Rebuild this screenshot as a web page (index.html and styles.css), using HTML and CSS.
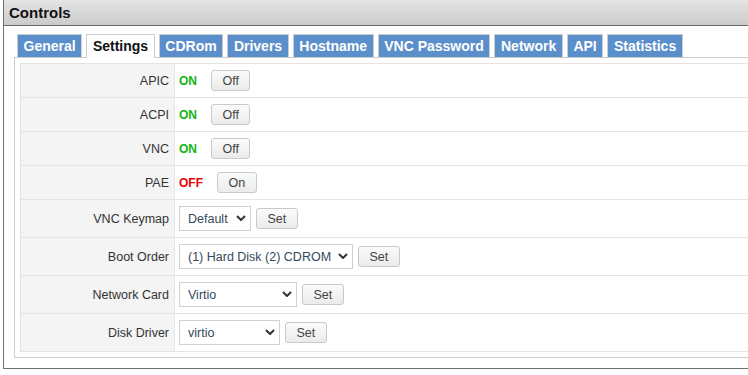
FILE: index.html
```html
<!DOCTYPE html>
<html lang="en">
<head>
    <meta charset="UTF-8">
    <meta name="viewport" content="width=device-width, initial-scale=1.0">
    <title>Controls</title>
    <link rel="stylesheet" href="styles.css">
</head>
<body>
    <div class="panel">
        <div class="panel-header">Controls</div>
        <div class="panel-body">
            <ul class="tabs">
                <li class="tab">General</li>
                <li class="tab active">Settings</li>
                <li class="tab">CDRom</li>
                <li class="tab">Drivers</li>
                <li class="tab">Hostname</li>
                <li class="tab">VNC Password</li>
                <li class="tab">Network</li>
                <li class="tab">API</li>
                <li class="tab">Statistics</li>
            </ul>
            <div class="tab-content">
                <table class="settings">
                    <tr class="toggle-row">
                        <td class="label">APIC</td>
                        <td class="value"><div class="field"><span class="state on">ON</span><button class="btn">Off</button></div></td>
                    </tr>
                    <tr class="toggle-row">
                        <td class="label">ACPI</td>
                        <td class="value"><div class="field"><span class="state on">ON</span><button class="btn">Off</button></div></td>
                    </tr>
                    <tr class="toggle-row">
                        <td class="label">VNC</td>
                        <td class="value"><div class="field"><span class="state on">ON</span><button class="btn">Off</button></div></td>
                    </tr>
                    <tr class="toggle-row">
                        <td class="label">PAE</td>
                        <td class="value"><div class="field"><span class="state off">OFF</span><button class="btn">On</button></div></td>
                    </tr>
                    <tr class="select-row">
                        <td class="label">VNC Keymap</td>
                        <td class="value">
                            <div class="field">
                                <div class="select-wrap">
                                    <select class="select keymap">
                                        <option>Default</option>
                                        <option>en-us</option>
                                        <option>de</option>
                                    </select>
                                    <svg class="chevron" width="10" height="6" viewBox="0 0 10 6"><path d="M1 1 L5 5 L9 1" fill="none" stroke="#333" stroke-width="2"/></svg>
                                </div>
                                <button class="btn">Set</button>
                            </div>
                        </td>
                    </tr>
                    <tr class="select-row">
                        <td class="label">Boot Order</td>
                        <td class="value">
                            <div class="field">
                                <div class="select-wrap">
                                    <select class="select boot">
                                        <option>(1) Hard Disk (2) CDROM</option>
                                        <option>(1) CDROM (2) Hard Disk</option>
                                    </select>
                                    <svg class="chevron" width="10" height="6" viewBox="0 0 10 6"><path d="M1 1 L5 5 L9 1" fill="none" stroke="#333" stroke-width="2"/></svg>
                                </div>
                                <button class="btn">Set</button>
                            </div>
                        </td>
                    </tr>
                    <tr class="select-row">
                        <td class="label">Network Card</td>
                        <td class="value">
                            <div class="field">
                                <div class="select-wrap">
                                    <select class="select netcard">
                                        <option>Virtio</option>
                                        <option>e1000</option>
                                        <option>rtl8139</option>
                                    </select>
                                    <svg class="chevron" width="10" height="6" viewBox="0 0 10 6"><path d="M1 1 L5 5 L9 1" fill="none" stroke="#333" stroke-width="2"/></svg>
                                </div>
                                <button class="btn">Set</button>
                            </div>
                        </td>
                    </tr>
                    <tr class="select-row">
                        <td class="label">Disk Driver</td>
                        <td class="value">
                            <div class="field">
                                <div class="select-wrap">
                                    <select class="select disk">
                                        <option>virtio</option>
                                        <option>ide</option>
                                        <option>scsi</option>
                                    </select>
                                    <svg class="chevron" width="10" height="6" viewBox="0 0 10 6"><path d="M1 1 L5 5 L9 1" fill="none" stroke="#333" stroke-width="2"/></svg>
                                </div>
                                <button class="btn">Set</button>
                            </div>
                        </td>
                    </tr>
                </table>
            </div>
        </div>
    </div>
</body>
</html>
```

FILE: styles.css
```css
html, body {
    overflow: hidden;
}
body {
    margin: 0;
    font-family: "Liberation Sans", Arial, sans-serif;
    font-size: 12.5px;
    color: #333;
    background: #fff;
}
.panel {
    width: 800px;
    margin-left: 3px;
    border: 1px solid #707070;
    border-top: none;
}
.panel-header {
    height: 25px;
    line-height: 25px;
    padding-left: 5px;
    font-size: 15px;
    font-weight: bold;
    color: #111;
    background: linear-gradient(#e4e4e4, #cbcbcb);
    border-bottom: 1px solid #6a6a6a;
}
.panel-body {
    padding: 8px 10px 10px 10px;
}
.tabs {
    display: flex;
    gap: 4px;
    margin: 0;
    padding: 0 0 0 3px;
    list-style: none;
}
.tab {
    line-height: 22px;
    padding: 0 5.6px;
    font-size: 14px;
    font-weight: bold;
    color: #fff;
    background: #5b8fcb;
    border: 1px solid #c8cdd3;
    border-bottom: none;
}
.tab.active {
    position: relative;
    z-index: 1;
    color: #111;
    background: #fff;
    border-color: #cccccc;
    padding-bottom: 1px;
    margin-bottom: -1px;
}
.tab-content {
    border: 1px solid #cccccc;
    padding: 5px;
}
.settings {
    width: 100%;
    border-collapse: separate;
    border-spacing: 0;
    border: 1px solid #e4e4e4;
}
.settings td {
    box-sizing: border-box;
    padding: 0;
    border-bottom: 1px solid #e4e4e4;
}
.settings tr:last-child td {
    border-bottom: none;
}
.toggle-row td {
    height: 34px;
}
.select-row td {
    height: 38px;
}
.settings tr:last-child td {
    height: 37px;
}
.label {
    width: 154px;
    padding-right: 5px !important;
    text-align: right;
    background: #f4f4f4;
    border-right: 1px solid #e4e4e4;
}
.value {
    padding-left: 4px !important;
}
.field {
    display: flex;
    align-items: center;
    gap: 5px;
}
.state {
    font-size: 12px;
    font-weight: bold;
    margin-right: 9px;
}
.state.on {
    color: #14b414;
}
.state.off {
    color: #ee0000;
}
.btn {
    height: 21px;
    padding: 0 10.5px;
    font-family: inherit;
    font-size: 12.5px;
    color: #444;
    background: linear-gradient(#fbfbfb, #ebebeb);
    border: 1px solid #c9c9c9;
    border-radius: 3px;
}
.select-wrap {
    position: relative;
    display: flex;
}
.select {
    appearance: none;
    height: 25px;
    padding: 0 20px 0 8px;
    font-family: inherit;
    font-size: 12.5px;
    color: #34495a;
    background: #fff;
    border: 1px solid #d0d0d0;
    border-radius: 0;
}
.chevron {
    position: absolute;
    right: 5px;
    top: 9px;
    pointer-events: none;
}
.keymap {
    width: 72px;
}
.boot {
    width: 174px;
}
.netcard {
    width: 118px;
}
.disk {
    width: 101px;
}
```
